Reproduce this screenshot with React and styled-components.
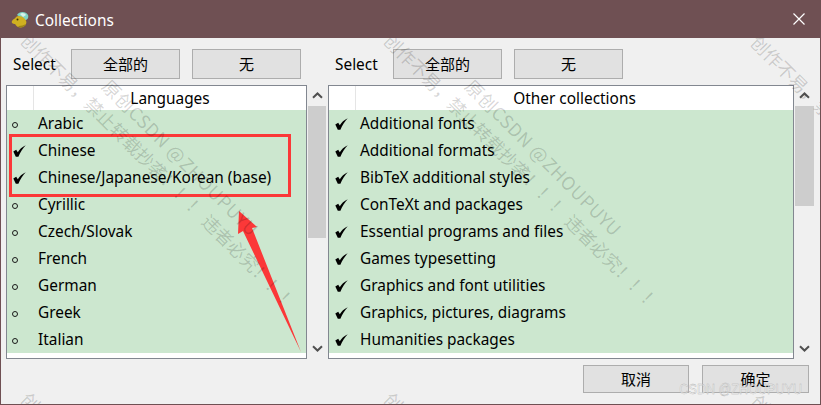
import React from "react";
import styled, { createGlobalStyle } from "styled-components";

const GlobalStyle = createGlobalStyle`
  html, body {
    margin: 0;
    padding: 0;
    background: #f0f0f0;
  }
  body {
    font-family: "Noto Sans", "Noto Sans CJK SC", sans-serif;
    font-size: 15.4px;
    color: #000;
  }
`;

const Window = styled.div`
  position: relative;
  box-sizing: border-box;
  width: 821px;
  height: 405px;
  display: flex;
  flex-direction: column;
  overflow: hidden;
  border: 1px solid #6f5053;
  background: #f0f0f0;
`;

const TitleBar = styled.div`
  height: 37px;
  flex: none;
  display: flex;
  align-items: center;
  padding: 0 15px 0 10px;
  gap: 6px;
  background: #6f5053;
  color: #fff;
`;

const TitleText = styled.span`
  flex: 1;
  padding-top: 1px;
  font-size: 15.4px;
`;

const CloseSlot = styled.span`
  display: flex;
  margin-top: -2px;
`;

const Body = styled.div`
  position: relative;
  flex: 1;
  overflow: hidden;
  padding: 11px 0 0 5px;
`;

const Panes = styled.div`
  display: flex;
  gap: 2px;
`;

const Pane = styled.div`
  display: flex;
  flex-direction: column;
  gap: 6px;
`;

const SelectRow = styled.div`
  display: flex;
  align-items: center;
  height: 30px;
  padding-left: 7px;
  gap: 12px;
`;

const SelectLabel = styled.span`
  width: 46px;
  line-height: 30px;
  padding-top: 1px;
`;

const Button = styled.button`
  box-sizing: border-box;
  width: ${(p) => p.$width}px;
  height: ${(p) => p.$height}px;
  padding: 0 0 1px;
  background: #e1e1e1;
  border: 1px solid #adadad;
  color: #000;
  font-family: "Noto Sans CJK SC", sans-serif;
  font-size: 15px;
  line-height: 1;
`;

const ListRow = styled.div`
  display: flex;
  gap: 1px;
`;

const List = styled.div`
  box-sizing: border-box;
  width: ${(p) => p.$width}px;
  height: 274px;
  border: 1px solid #828790;
  background: #fff;
`;

const ListHeader = styled.div`
  display: flex;
  height: 24px;
  line-height: 26px;
`;

const HeaderCorner = styled.div`
  width: 26px;
  flex: none;
  border-right: 1px solid #e5e5e5;
`;

const HeaderTitle = styled.div`
  flex: 1;
  text-align: center;
`;

const Row = styled.div`
  box-sizing: border-box;
  display: flex;
  align-items: center;
  height: 27px;
  background: #cce7cf;
`;

const Marker = styled.div`
  width: 31px;
  flex: none;
  display: flex;
  align-items: center;
  padding-left: ${(p) => p.$pad}px;
  box-sizing: border-box;
`;

const Ring = styled.span`
  box-sizing: border-box;
  width: 6px;
  height: 6px;
  margin-top: 2px;
  border: 1px solid #1a1a1a;
  border-radius: 50%;
`;

const Scrollbar = styled.div`
  width: ${(p) => p.$width}px;
  height: 274px;
  display: flex;
  flex-direction: column;
`;

const ArrowCell = styled.div`
  height: 21px;
  flex: none;
  display: flex;
  align-items: center;
  justify-content: center;
`;

const Track = styled.div`
  flex: 1;
`;

const Thumb = styled.div`
  height: ${(p) => p.$height}px;
  background: #cdcdcd;
`;

const Footer = styled.div`
  display: flex;
  justify-content: flex-end;
  gap: 13px;
  margin-top: 6px;
  padding-right: 11px;
`;

const Annotations = styled.svg`
  position: absolute;
  left: 0;
  top: 0;
  pointer-events: none;
`;

const Tile = styled.div`
  position: absolute;
  left: ${(p) => p.$x}px;
  top: ${(p) => p.$y}px;
  display: flex;
  align-items: flex-end;
  transform: rotate(45deg);
  transform-origin: 0 0;
  white-space: pre;
  font-family: "Noto Sans CJK SC", sans-serif;
  font-size: 18px;
  line-height: 25px;
  color: rgba(0, 0, 0, 0.17);
  pointer-events: none;
`;

const TileLines = styled.div`
  display: flex;
  flex-direction: column;
`;

const TileLatin = styled.span`
  letter-spacing: 0.7px;
`;

const Credit = styled.div`
  position: absolute;
  right: 18px;
  bottom: 6px;
  font-family: "Liberation Sans", sans-serif;
  font-size: 15px;
  line-height: 18px;
  transform: scaleX(0.84);
  transform-origin: 100% 50%;
  color: rgba(255, 255, 255, 0.6);
  -webkit-text-stroke: 0.4px #b0b0b0;
`;

const Bird = () => (
  <svg width="18" height="18" viewBox="0 0 18 18">
    <path d="M6 4 C8 0 15 0 17 4 C18 7 16 9 14 9 Z" fill="#7fd3c4" />
    <path d="M9 3 C11 1 14 2 15 4 L12 6 Z" fill="#d8f2ea" />
    <path d="M1 10 C2 8 4 8 5 6 C7 4 11 5 13 7 C15 9 16 11 15 13 C14 16 10 17 7 16 C5 15 5 14 4 13 C2 13 0 12 1 10 Z" fill="#d0b020" />
    <path d="M7 16 C10 17 14 16 15 13 C13 14 10 15 8 15 Z" fill="#9c8418" />
    <circle cx="6.5" cy="8.5" r="1" fill="#3a3208" />
  </svg>
);

const Close = () => (
  <svg width="12" height="12" viewBox="0 0 12 12">
    <path d="M0.5 0.5 L11.5 11.5 M11.5 0.5 L0.5 11.5" stroke="#fff" strokeWidth="1.2" />
  </svg>
);

const Check = () => (
  <svg width="13" height="12" viewBox="0 0 13 12">
    <path d="M0.3 6.5 L3.2 4.8 L4.8 7.2 C6.5 4.4 9 2 12.7 0.3 C9.8 3.5 7.2 7.5 5.4 11.7 L2.8 11.7 Z" fill="#000" />
  </svg>
);

const Chevron = ({ down }) => (
  <svg width="11" height="7" viewBox="0 0 11 7">
    <path
      d={down ? "M1 1.2 L5.5 5.5 L10 1.2" : "M1 5.8 L5.5 1.5 L10 5.8"}
      fill="none"
      stroke="#505050"
      strokeWidth="2"
    />
  </svg>
);

const languages = [
  ["Arabic", false],
  ["Chinese", true],
  ["Chinese/Japanese/Korean (base)", true],
  ["Cyrillic", false],
  ["Czech/Slovak", false],
  ["French", false],
  ["German", false],
  ["Greek", false],
  ["Italian", false],
];

const others = [
  "Additional fonts",
  "Additional formats",
  "BibTeX additional styles",
  "ConTeXt and packages",
  "Essential programs and files",
  "Games typesetting",
  "Graphics and font utilities",
  "Graphics, pictures, diagrams",
  "Humanities packages",
].map((name) => [name, true]);

const CollectionPane = ({ title, rows, listWidth, barWidth, thumb }) => (
  <Pane>
    <SelectRow>
      <SelectLabel>Select</SelectLabel>
      <Button $width={109} $height={30}>全部的</Button>
      <Button $width={109} $height={30}>无</Button>
    </SelectRow>
    <ListRow>
      <List $width={listWidth}>
        <ListHeader>
          <HeaderCorner />
          <HeaderTitle>{title}</HeaderTitle>
        </ListHeader>
        {rows.map(([name, on]) => (
          <Row key={name}>
            <Marker $pad={on ? 6 : 5}>{on ? <Check /> : <Ring />}</Marker>
            {name}
          </Row>
        ))}
      </List>
      <Scrollbar $width={barWidth}>
        <ArrowCell><Chevron /></ArrowCell>
        <Thumb $height={thumb} />
        <Track />
        <ArrowCell><Chevron down /></ArrowCell>
      </Scrollbar>
    </ListRow>
  </Pane>
);

const Watermark = ({ x, y }) => (
  <Tile $x={x} $y={y}>
    <span>{"创作不易\uFF0C"}</span>
    <TileLines>
      <TileLatin>原创CSDN @ZHOUPUYU</TileLatin>
      <span>{"禁止转载抄袭\uFF01\uFF01\uFF01 违者必究\uFF01\uFF01\uFF01"}</span>
    </TileLines>
  </Tile>
);

export default function App() {
  return (
    <>
      <GlobalStyle />
      <Window>
        <TitleBar>
          <Bird />
          <TitleText>Collections</TitleText>
          <CloseSlot><Close /></CloseSlot>
        </TitleBar>
        <Body>
          <Panes>
            <CollectionPane title="Languages" rows={languages} listWidth={301} barWidth={18} thumb={132} />
            <CollectionPane title="Other collections" rows={others} listWidth={466} barWidth={19} thumb={100} />
          </Panes>
          <Footer>
            <Button $width={106} $height={28}>取消</Button>
            <Button $width={107} $height={28}>确定</Button>
          </Footer>
          <Annotations width="819" height="366" viewBox="1 39 819 366">
            <rect x="10.5" y="136.5" width="279" height="60" fill="none" stroke="#fb3838" strokeWidth="3" />
            <polygon points="239,212 257,228 252,229 301,353 243,232 238,235" fill="#fb3838" />
          </Annotations>
          {[[50, -28], [413, -28], [780, -26], [50, 331], [413, 331], [780, 333]].map(([x, y]) => (
            <Watermark key={`${x}-${y}`} x={x} y={y} />
          ))}
          <Credit>CSDN @ZHOUPUYU</Credit>
        </Body>
      </Window>
    </>
  );
}
